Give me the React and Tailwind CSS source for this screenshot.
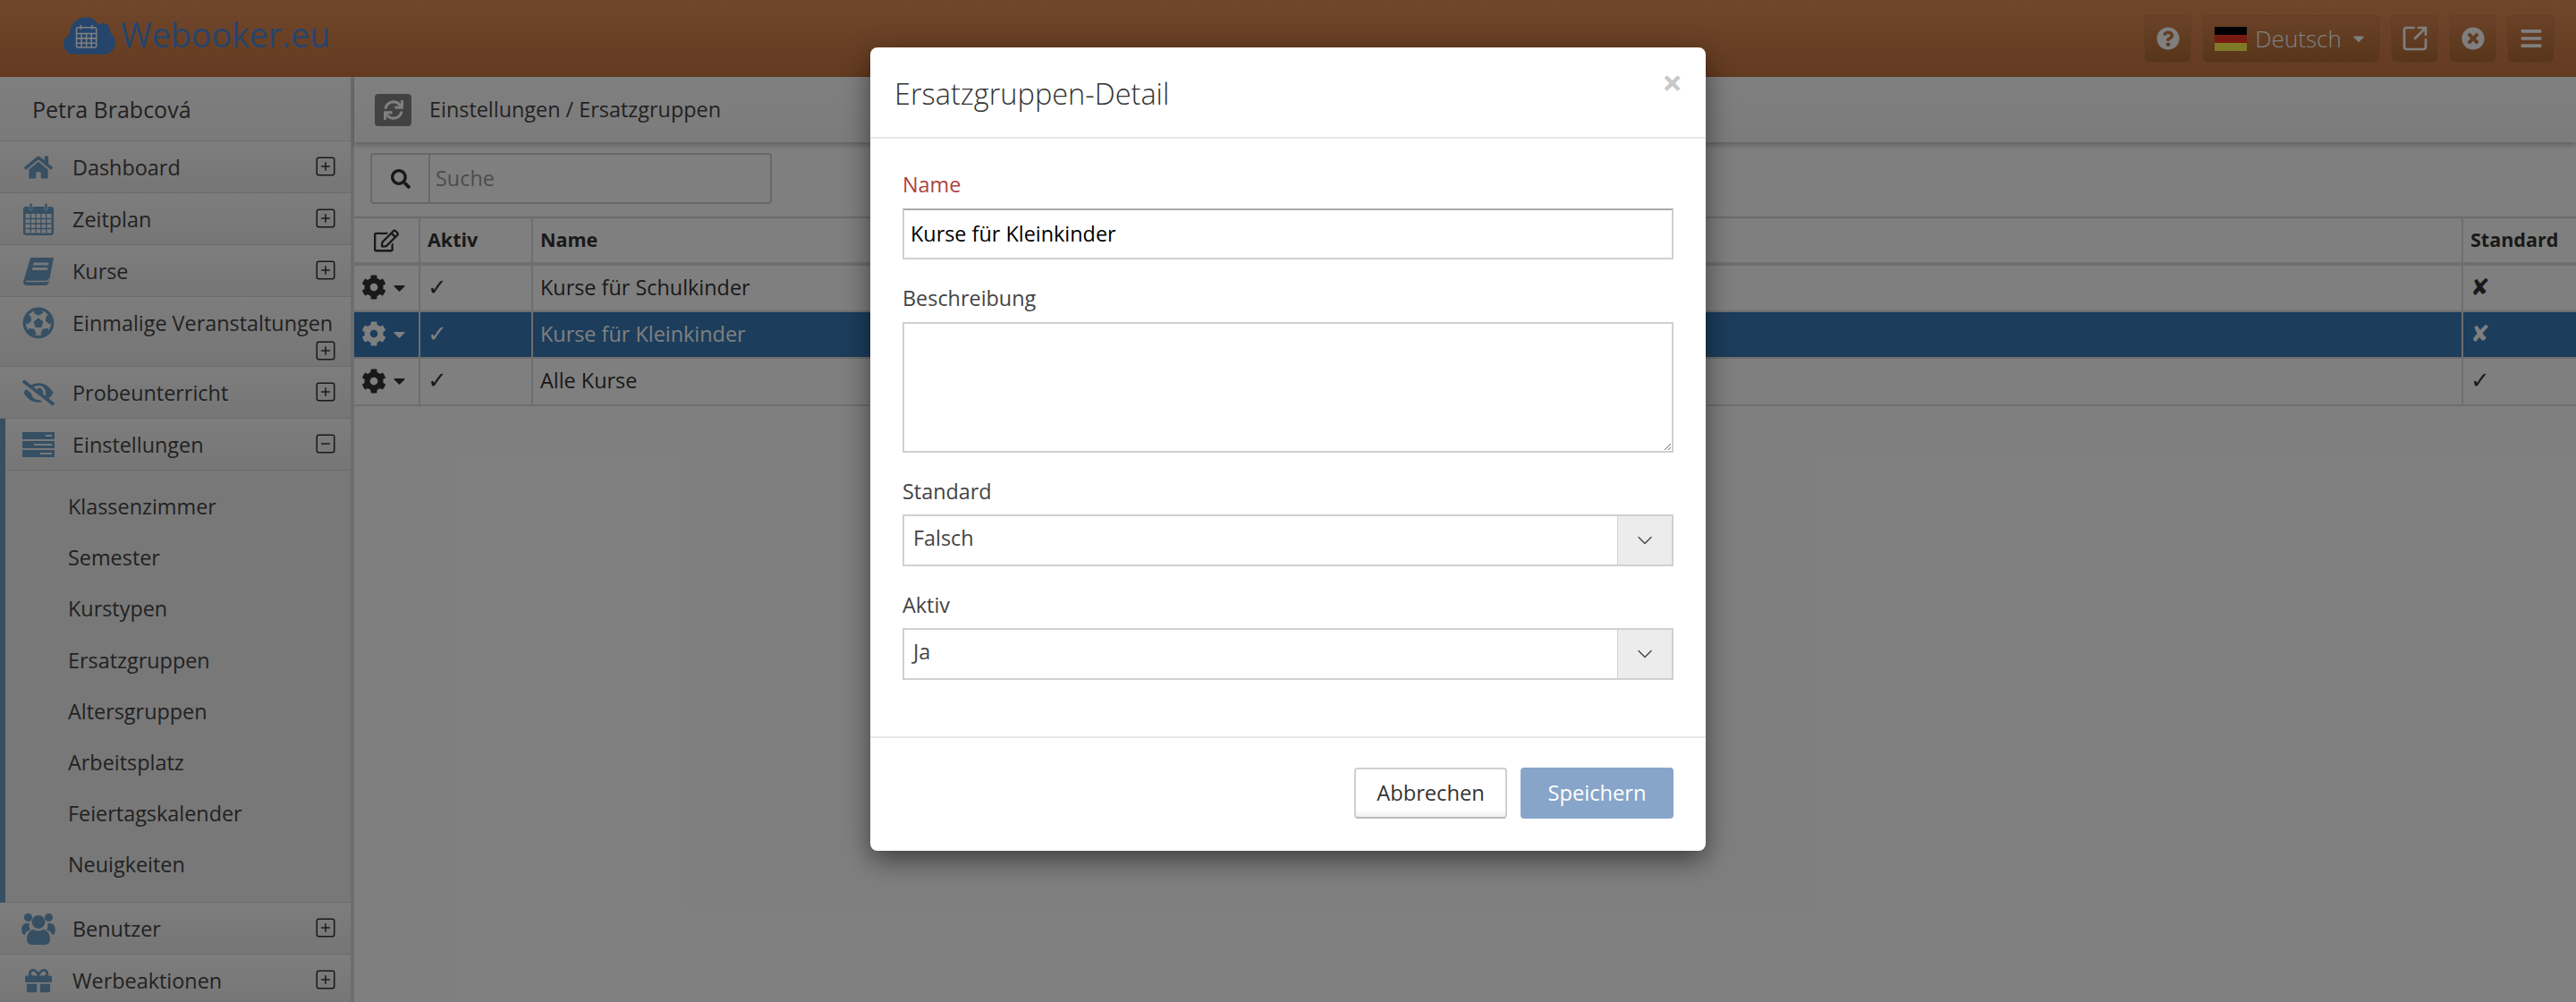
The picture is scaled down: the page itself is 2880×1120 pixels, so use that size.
import React from 'react';
import { SquarePlus, SquareMinus, ChevronDown, SquareArrowOutUpRight } from 'lucide-react';
import {
  FaHome, FaFutbol, FaEyeSlash, FaGift, FaSync, FaSearch, FaRegEdit, FaCog, FaCaretDown,
  FaQuestionCircle, FaTimesCircle, FaBars,
} from 'react-icons/fa';

const font = 'font-["Open_Sans",sans-serif]';

const subItems = ['Klassenzimmer', 'Semester', 'Kurstypen', 'Ersatzgruppen', 'Altersgruppen', 'Arbeitsplatz', 'Feiertagskalender', 'Neuigkeiten'];

const rows = [
  { name: 'Kurse für Schulkinder', standard: '✘' },
  { name: 'Kurse für Kleinkinder', standard: '✘', selected: true },
  { name: 'Alle Kurse', standard: '✓' },
];

const Logo = () => (
  <svg width="58" height="43" viewBox="0 0 60 44" className="shrink-0">
    <path fill="#4a8ad8" d="M12 44C5 44 0 38 0 32c0-5 3-9 7-11 0-11 8-20 18-20 7 0 13 3 16 9 1-1 3-2 5-2 5 0 8 4 8 8v3c3 2 6 6 6 11 0 8-6 14-13 14H12z" />
    <g fill="none" stroke="#ffffff" strokeWidth="1.6">
      <rect x="15" y="13" width="23" height="23" rx="2" />
      <path d="M15 20h23M15 25.500h23M15 31h23M20.700 20v16M26.500 20v16M32.300 20v16M20 10v5M33 10v5" />
    </g>
  </svg>
);

const CalendarIcon = () => (
  <svg width="34" height="36" viewBox="0 0 34 36">
    <rect x="0" y="4" width="34" height="32" rx="3" fill="currentColor" />
    <rect x="7" y="0" width="3" height="8" rx="1.500" fill="currentColor" stroke="#f4f4f4" strokeWidth="0.8" />
    <rect x="24" y="0" width="3" height="8" rx="1.500" fill="currentColor" stroke="#f4f4f4" strokeWidth="0.8" />
    <rect x="2.500" y="12" width="29" height="21.500" fill="#f4f4f4" />
    <path d="M2.500 17.500h29M2.500 23h29M2.500 28.500h29M8.300 12v21.500M14.100 12v21.500M19.900 12v21.500M25.700 12v21.500" stroke="currentColor" strokeWidth="1.300" />
  </svg>
);

const BookIcon = () => (
  <svg width="34" height="31" viewBox="0 0 34 31">
    <path fill="currentColor" d="M8 0h26l-5 26c-.3 2-2 5-4 5H4c-3 0-4-2-4-4 0-1 .5-2 1-3L8 0z" />
    <path fill="none" stroke="#f0f0f0" strokeWidth="1.300" d="M3 26.500h23c1.500 0 2.500-1 3-3" />
    <path fill="#f0f0f0" d="M11.500 5.500h17l-.6 3h-17zM10.500 11h17l-.6 3h-17z" />
  </svg>
);

const ServerIcon = () => (
  <svg width="36" height="28" viewBox="0 0 36 28">
    <path fill="currentColor" fillRule="evenodd" d="M0 0h36v8H0zM26 3v2h7V3zM0 10h36v8H0zM13 13v2h20v-2zM0 20h36v8H0zM20 23v2h13v-2z" />
  </svg>
);

const UsersIcon = () => (
  <svg width="38" height="36" viewBox="0 0 38 36" fill="currentColor">
    <circle cx="7.500" cy="5.500" r="4.500" />
    <circle cx="30.500" cy="5.500" r="4.500" />
    <path d="M1 24c-2-7 0-12 5-12h3c-1 3 0 6 1 8-3 0-6 2-6 5zM37 24c2-7 0-12-5-12h-3c1 3 0 6-1 8 3 0 6 2 6 5z" />
    <circle cx="19" cy="10.500" r="7.500" />
    <path d="M6 30c0-7 4-11 8-11 1.500 1 3 1.500 5 1.500s3.500-.5 5-1.500c4 0 8 4 8 11 0 4-3 6-6 6H12c-3 0-6-2-6-6z" />
  </svg>
);

const HeaderBtn = ({ children, className = '' }) => (
  <div className={`h-[53px] flex items-center justify-center rounded-md border border-[#c07c48] bg-gradient-to-b from-[#d68450] to-[#b06c34] text-white ${className}`}>
    {children}
  </div>
);

const NavItem = ({ icon, label, open, wrap, nested }) => (
  <div className={`relative shrink-0 flex items-start border-b border-[#d8d8d8] bg-gradient-to-b from-[#fbfbfb] to-[#ececec] ${wrap ? 'h-[78px]' : 'h-[58px]'}`}>
    <div className={`h-[58px] flex items-center justify-center text-[#6c9fc6] shrink-0 ${nested ? 'w-[75px] pr-[1px]' : 'w-[81px] pl-[5px]'}`}>
      {icon}
    </div>
    <span className="mt-[13px] text-[23.400px] leading-[33px] text-[#444]">{label}</span>
    {open ? (
      <SquareMinus size={26} strokeWidth={1.4} className="absolute right-[15px] top-[15px] text-[#333]" />
    ) : (
      <SquarePlus size={26} strokeWidth={1.4} className={`absolute right-[15px] text-[#333] ${wrap ? 'top-[47px]' : 'top-[15px]'}`} />
    )}
  </div>
);

const Sidebar = () => (
  <aside className="w-[396px] h-[1034px] overflow-hidden shrink-0 border-r-[4px] border-[#dcdcdc] bg-[#f2f2f2] flex flex-col">
    <div className="h-[72px] shrink-0 flex items-center pl-[36px] pt-[2px] text-[25px] text-[#444] border-b border-[#d8d8d8] bg-gradient-to-b from-[#fdfdfd] to-[#f4f4f4]">
      Petra Brabcová
    </div>
    <NavItem icon={<FaHome size={32} />} label="Dashboard" />
    <NavItem icon={<CalendarIcon />} label="Zeitplan" />
    <NavItem icon={<BookIcon />} label="Kurse" />
    <NavItem icon={<FaFutbol size={36} />} label="Einmalige Veranstaltungen" wrap />
    <NavItem icon={<FaEyeSlash size={36} />} label="Probeunterricht" />
    <div className="shrink-0 border-l-[6px] border-[#6c9fc6]">
      <NavItem icon={<ServerIcon />} label="Einstellungen" open nested />
      <div className="flex flex-col pl-[70px] pt-[12px] h-[483px] border-b border-[#d8d8d8] bg-[#f0f0f0]">
        {subItems.map((item) => (
          <div key={item} className="h-[57.200px] shrink-0 flex items-center text-[23.400px] text-[#444]">
            {item}
          </div>
        ))}
      </div>
    </div>
    <NavItem icon={<UsersIcon />} label="Benutzer" />
    <NavItem icon={<FaGift size={30} />} label="Werbeaktionen" />
  </aside>
);

const Table = () => (
  <table className="w-full table-fixed border-collapse text-[23.400px] text-[#333]">
    <colgroup>
      <col className="w-[73px]" />
      <col className="w-[126px]" />
      <col />
      <col className="w-[127px]" />
    </colgroup>
    <thead>
      <tr className="h-[52px] border-t-2 border-b-[4px] border-[#d4d4d4] border-b-[#dcdcdc] text-left font-bold text-[21.500px]">
        <th className="border-r-2 border-[#dcdcdc] pl-[22px]"><FaRegEdit size={28} /></th>
        <th className="border-r-2 border-[#dcdcdc] pl-[8px]">Aktiv</th>
        <th className="border-r-2 border-[#dcdcdc] pl-[8px]">Name</th>
        <th className="pl-[8px]">Standard</th>
      </tr>
    </thead>
    <tbody>
      {rows.map((row) => (
        <tr key={row.name} className={`h-[52.500px] border-b-2 border-[#dcdcdc] ${row.selected ? 'bg-[#387ab8] text-white' : ''}`}>
          <td className="border-r-2 border-[#dcdcdc] pl-[8px] pb-[1px]">
            <span className="flex items-center gap-[4px]">
              <FaCog size={28} />
              <FaCaretDown size={21} />
            </span>
          </td>
          <td className='border-r-2 border-[#dcdcdc] pl-[8px] pb-[1px] text-[26px] font-["DejaVu_Sans",sans-serif]'>✓</td>
          <td className="border-r-2 border-[#dcdcdc] pl-[8px] pb-[1px] font-normal">{row.name}</td>
          <td className='pl-[8px] pb-[1px] text-[26px] font-["DejaVu_Sans",sans-serif]'>{row.standard}</td>
        </tr>
      ))}
    </tbody>
  </table>
);

const SelectBox = ({ value }) => (
  <div className="h-[58px] flex border-2 border-[#d0d0d0] text-[23.400px] text-[#444]">
    <div className="flex-1 pl-[10px] flex items-center pb-[4px]">{value}</div>
    <div className="w-[61px] flex items-center justify-center bg-[#ececec] border-l border-[#d0d0d0]">
      <ChevronDown size={28} strokeWidth={1.2} />
    </div>
  </div>
);

const Modal = () => (
  <div className="absolute left-[973px] top-[53px] w-[934px] h-[898px] rounded-[8px] bg-white shadow-[0_10px_30px_rgba(0,0,0,0.5)] flex flex-col">
    <div className="h-[102px] shrink-0 flex items-center justify-between pl-[27px] pr-[26px] border-b-2 border-[#e8e8e8]">
      <h4 className="text-[32.500px] font-light text-[#333] pt-[4px]">Ersatzgruppen-Detail</h4>
      <span className="text-[40px] font-bold leading-none text-[#c8c8c8] mb-[22px]">×</span>
    </div>
    <div className="flex-1 px-[36px] flex flex-col">
      <label className="mt-[35px] text-[23.400px] leading-[33px] text-[#a94442]">Name</label>
      <div className="mt-[10px] h-[57px] flex items-center pl-[7px] border-2 border-[#d0d0d0] border-t-[#aaaaaa] text-[23.400px] text-black">
        Kurse für Kleinkinder
      </div>
      <label className="mt-[27px] text-[23.400px] leading-[33px] text-[#444]">Beschreibung</label>
      <textarea readOnly className="mt-[10px] h-[146px] shrink-0 border-2 border-[#d0d0d0] resize-y outline-none" />
      <label className="mt-[27px] text-[23.400px] leading-[33px] text-[#444]">Standard</label>
      <div className="mt-[9px]"><SelectBox value="Falsch" /></div>
      <label className="mt-[27px] text-[23.400px] leading-[33px] text-[#444]">Aktiv</label>
      <div className="mt-[9px]"><SelectBox value="Ja" /></div>
    </div>
    <div className="h-[128px] shrink-0 border-t-2 border-[#e8e8e8] flex justify-end items-start gap-[15px] pt-[33px] pr-[36px] text-[23.700px]">
      <button className="w-[171px] h-[57px] rounded-[4px] border-2 border-[#d0d0d0] border-b-[#bbbbbb] bg-gradient-to-b from-white from-85% to-[#f0f0f0] text-[#333]">Abbrechen</button>
      <button className="w-[171px] h-[57px] rounded-[4px] bg-[#87a5c9] text-white">Speichern</button>
    </div>
  </div>
);

const App = () => (
  <div className={`relative h-[1120px] w-[2880px] overflow-hidden bg-white ${font}`}>
    <header className="h-[86px] bg-gradient-to-b from-[#e28e58] to-[#c87640] flex items-center justify-between pl-[71px]">
      <div className="flex items-center gap-[6px] pb-[8px]">
        <Logo />
        <span className="text-[37.600px] leading-none text-[#4a8ad8]">Webooker.eu</span>
      </div>
      <div className="flex items-center gap-[12px] pr-[24px]">
        <HeaderBtn className="w-[53px]"><FaQuestionCircle size={26} /></HeaderBtn>
        <HeaderBtn className="w-[199px] gap-[9px] text-[26px] font-light">
          <span className="w-[36px] h-[27px] flex flex-col shrink-0">
            <span className="flex-1 bg-black" />
            <span className="flex-1 bg-[#f03420]" />
            <span className="flex-1 bg-[#fff450]" />
          </span>
          <span>Deutsch</span>
          <FaCaretDown size={20} />
        </HeaderBtn>
        <HeaderBtn className="w-[53px]"><SquareArrowOutUpRight size={32} strokeWidth={2} /></HeaderBtn>
        <HeaderBtn className="w-[53px]"><FaTimesCircle size={26} /></HeaderBtn>
        <HeaderBtn className="w-[53px]"><FaBars size={26} /></HeaderBtn>
      </div>
    </header>
    <div className="flex h-[1034px]">
      <Sidebar />
      <main className="flex-1 flex flex-col min-w-0">
        <div className="h-[73px] flex items-center pl-[23px] gap-[20px] text-[23.400px] text-[#444] shadow-[0_3px_6px_rgba(0,0,0,0.25)] bg-gradient-to-b from-white to-[#f8f8f8]">
          <span className="w-[41px] h-[36px] rounded-[4px] bg-[#858585] text-white flex items-center justify-center">
            <FaSync size={22} />
          </span>
          <span>Einstellungen / Ersatzgruppen</span>
        </div>
        <div className="pl-[18px] pt-[12px] pb-[14px]">
          <div className="w-[449px] h-[57px] flex border-2 border-[#d0d0d0] rounded-[4px] text-[23.400px]">
            <span className="w-[65px] flex items-center justify-center border-r-2 border-[#d0d0d0] text-[#333]"><FaSearch size={22} /></span>
            <span className="pl-[6px] flex items-center text-[#999]">Suche</span>
          </div>
        </div>
        <Table />
      </main>
    </div>
    <div className="absolute inset-0 bg-black/50" />
    <Modal />
  </div>
);

export default App;
